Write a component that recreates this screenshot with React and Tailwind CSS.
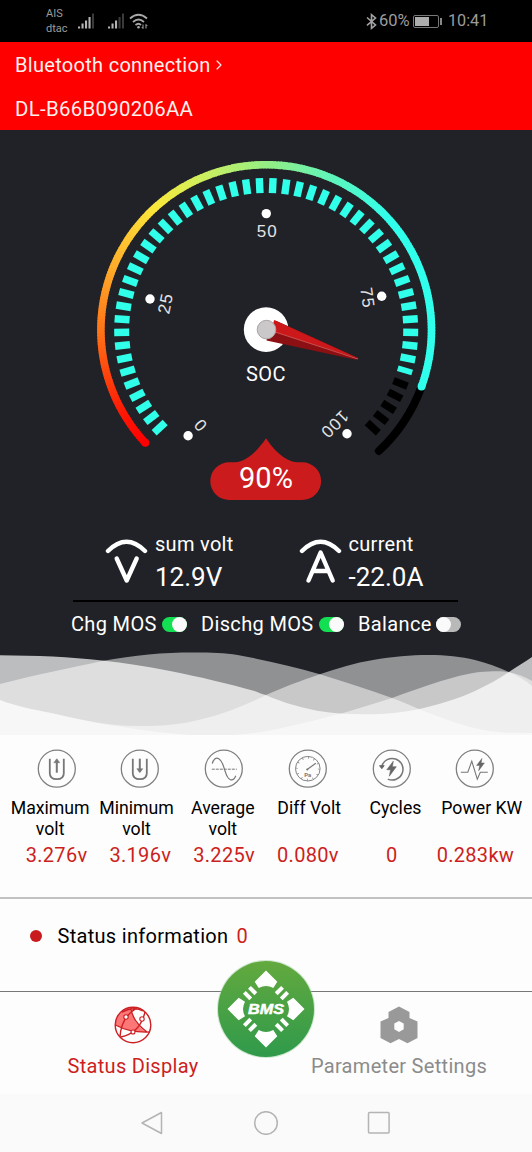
import { ChevronRight } from "lucide-react";

const ARC_STOPS = [
  [0, [255, 0, 0]],
  [14, [255, 28, 5]],
  [43, [255, 118, 24]],
  [62, [255, 166, 40]],
  [90, [252, 232, 58]],
  [112, [200, 240, 98]],
  [135, [143, 238, 136]],
  [157, [92, 245, 190]],
  [180, [48, 255, 236]],
  [270, [48, 255, 236]],
];

const CX = 266.2;
const CY = 330;

const polar = (deg, r) => {
  const a = (deg * Math.PI) / 180;
  return [CX + r * Math.cos(a), CY + r * Math.sin(a)];
};

const arcPath = (from, to, r) => {
  const [x1, y1] = polar(from, r);
  const [x2, y2] = polar(to, r);
  return `M${x1} ${y1}A${r} ${r} 0 ${to - from > 180 ? 1 : 0} 1 ${x2} ${y2}`;
};

const arcColor = (t) => {
  const i = ARC_STOPS.findIndex(([pos]) => pos > t);
  const [p0, c0] = ARC_STOPS[i - 1];
  const [p1, c1] = ARC_STOPS[i];
  const k = (t - p0) / (p1 - p0);
  return `rgb(${c0.map((v, n) => Math.round(v + (c1[n] - v) * k)).join(",")})`;
};

const marks = [
  { label: "0", dot: [188.1, 435.8], text: [201, 425.7], rotate: 48 },
  { label: "25", dot: [150, 299], text: [165.2, 303.2], rotate: -78 },
  { label: "50", dot: [266.3, 213.6], text: [267.3, 230.7], rotate: 0 },
  { label: "75", dot: [381.7, 296.2], text: [367.6, 297.8], rotate: 82 },
  { label: "100", dot: [347, 433.7], text: [334.8, 424.6], rotate: 135 },
];

const Gauge = ({ value }) => {
  const start = 137;
  const end = start + value * 2.7;
  const segments = Array.from({ length: Math.round(value * 2.7) }, (_, i) => i);
  const ticks = Array.from({ length: 52 }, (_, i) => i);

  return (
    <svg className="block h-[380px] w-full" viewBox="0 130 532 380">
      <path d={arcPath(end, start + 270, 165.3)} fill="none" stroke="#000" strokeWidth="8" strokeLinecap="round" />
      <circle cx={polar(start, 165.3)[0]} cy={polar(start, 165.3)[1]} r="4" fill={arcColor(0)} />
      <circle cx={polar(end, 165.3)[0]} cy={polar(end, 165.3)[1]} r="4" fill={arcColor(243)} />
      {segments.map((i) => (
        <path
          key={i}
          d={arcPath(start + i, Math.min(start + i + 1.3, end), 165.3)}
          fill="none"
          stroke={arcColor(i)}
          strokeWidth="7.6"
        />
      ))}
      {ticks.map((i) => (
        <rect
          key={i}
          x={CX + 137}
          y={CY - 3.7}
          width="15"
          height={i === 46 ? 5.8 : 7.4}
          fill={i < 47 ? "#30ffea" : "#000"}
          transform={`rotate(${137.5 + i * 5.196} ${CX} ${CY})`}
        />
      ))}
      {marks.map((m) => (
        <g key={m.label}>
          <circle cx={m.dot[0]} cy={m.dot[1]} r="4.7" fill="#fff" />
          <text
            transform={`translate(${m.text[0]} ${m.text[1]}) rotate(${m.rotate})`}
            y="6"
            textAnchor="middle"
            className="fill-[#e4e4e4] font-['Liberation_Sans'] text-[17px] tracking-[1px]"
          >
            {m.label}
          </text>
        </g>
      ))}
      <circle cx="266.1" cy="329.6" r="22.3" fill="#fff" />
      <path d="M275.5 320.5L358.5 358L356 359.8L266.5 340.5L268 330Z" fill="#8c1013" />
      <path d="M274 320L358.5 358.6L272 331Z" fill="#cd181b" />
      <path d="M272 331L358 359" stroke="#d8605c" strokeWidth="0.8" />
      <circle cx="266.5" cy="329.6" r="9.3" fill="#cbc8c9" stroke="#aaa4a5" strokeWidth="1" />
      <text x="266" y="381.3" textAnchor="middle" className="fill-white text-[20px] tracking-[0.4px]">
        SOC
      </text>
      <path
        d="M266 438.3C273 449 285 461.8 297 462.2H302.2A18.9 18.9 0 0 1 302.2 500H229.2A18.9 18.9 0 0 1 229.2 462.2H235C247 461.8 259 449 266 438.3Z"
        fill="#cb1b1c"
      />
      <text x="266" y="488.3" textAnchor="middle" className="fill-white text-[29px]">
        {value}%
      </text>
    </svg>
  );
};

const Signal = ({ active }) => (
  <svg className="h-4 w-4" viewBox="0 0 16 16">
    {[2, 5, 8, 11.5, 15].map((h, i) => (
      <rect key={h} x={i * 3.5} y={15.5 - h} width="2.1" height={h} fill={i < active ? "#b4b4b4" : "#3a3a3a"} />
    ))}
  </svg>
);

const StatusBar = () => (
  <div className="flex h-[42px] items-center bg-black text-[#9c9c9c]">
    <div className="ml-[46px] w-8 text-[11px] leading-[15.5px]">
      <div>AIS</div>
      <div>dtac</div>
    </div>
    <Signal active={4} />
    <div className="ml-[14px]">
      <Signal active={3} />
    </div>
    <svg className="ml-[5px] h-[17px] w-5" viewBox="0 0 20 17" fill="none" stroke="#a8a8a8" strokeWidth="1.8">
      <path d="M1 5.5Q9.5 -2 18 5.5M4 9Q9.5 4 15 9M6.5 12Q9.5 9.5 12 12" />
      <circle cx="9.5" cy="14.3" r="1.3" fill="#a8a8a8" stroke="none" />
      <path d="M14 11.5v4M12.8 14l1.2 1.5M17 15.5v-4M18.3 13l-1.3-1.5" strokeWidth="1" />
    </svg>
    <svg className="ml-[217px] h-[17px] w-3" viewBox="0 0 12 17" fill="none" stroke="#a4a4a4" strokeWidth="1.6">
      <path d="M1 4.5L9.5 12L5.5 15.3V1.7L9.5 5L1 12.3" />
    </svg>
    <span className="w-[35px] pl-px text-[16.5px]">60%</span>
    <div className="flex h-[13px] w-[26px] rounded-[2px] border border-[#777] p-px">
      <div className="w-[14px] bg-[#adadad]" />
    </div>
    <div className="ml-px h-[7px] w-[2px] bg-[#888]" />
    <span className="ml-[6px] text-[16.2px]">10:41</span>
  </div>
);

const Header = () => (
  <header className="h-[88px] bg-[#fe0000] pl-[15px] text-[20px] tracking-[0.3px] text-[#fff0ec]">
    <div className="flex h-[45px] items-center">
      Bluetooth connection
      <ChevronRight className="h-[18px] w-4" strokeWidth={1.7} />
    </div>
    <div className="flex h-[44px] items-center text-[20.4px]">DL-B66B090206AA</div>
  </header>
);

const Reading = ({ label, value, children }) => (
  <div className="flex w-[193.5px]">
    <svg
      className="mt-[27px] h-[48px] w-[43px]"
      viewBox="0 0 43 48"
      fill="none"
      stroke="#fff"
      strokeWidth="4.4"
      strokeLinecap="round"
      strokeLinejoin="round"
    >
      <path d="M3 14Q21.5 -4.5 40 14" />
      {children}
    </svg>
    <div className="ml-[7px] pt-[22px] text-white">
      <div className="text-[20px] leading-6 tracking-[0.3px]">{label}</div>
      <div className="mt-[6px] text-[26px] leading-[30px]">{value}</div>
    </div>
  </div>
);

const Toggle = ({ label, on, className }) => (
  <div className={`flex items-center ${className}`}>
    <span className="flex-1 text-[20px] tracking-[0.35px] whitespace-nowrap text-white">{label}</span>
    <div className={`flex h-[15px] w-[25px] rounded-full ${on ? "justify-end bg-[#12e052]" : "bg-[#b9b9b9]"}`}>
      <div className="h-[15px] w-[15px] rounded-full bg-[#fafafa]" />
    </div>
  </div>
);

const Waves = () => (
  <svg className="block h-[95px] w-full" viewBox="0 640 532 95" fill="#fff">
    <path
      opacity="0.5"
      d="M0 684C35 675 70 668 102 661C135 655 163 652.5 193 652.5C212 652.5 225 652.7 237.5 655C265 660 292 666 319 674C345 682 370 690 392 698C403 702 412 706 421 710C445 719 465 727 489 731C505 733 518 733 532 733V735H0Z"
    />
    <path
      opacity="0.5"
      d="M0 700C15 706 33 709.5 51 713C82 720 110 726 136 726C155 726 170 725.5 187 722.5C216 717 240 708 266 695C285 687 300 681 319 674.6C338 668 355 663 373 660C393 656.5 410 655 429 655C446 655 461 656.5 475 660C487 663 498 667 509 672C518 676 525 680 532 686V735H0Z"
    />
    <path
      opacity="0.5"
      d="M0 700C15 706 33 709.5 51 713C68 717 84 720.5 102 724C130 728 145 731 170 733C186 735 203 736 220 735.5C245 735 266 732 288 726.5C308 722 325 718 343 713C360 708 376 703 392 698C408 692 425 686 441 681C458 676 474 671.5 489 671.5C507 670 520 674 532 681V735H0Z"
    />
    <path
      opacity="0.7"
      d="M0 655.3C36 655.5 70 657 102 660.4C125 663 147 666 170 671C200 677 230 684 254.5 691C258 692.5 262 694 266 695C279 701 291 704.5 305 708C321 712 338 714 356 714C378 715 398 713.5 417 709.5C438 705 457 699 475 691C487 685 499 679 509 672C516 667 525 662 532 657V735H0Z"
    />
  </svg>
);

const UTube = ({ up }) => (
  <>
    <path d="M13 10V24.5Q13 30.5 20 30.5Q27 30.5 27 24.5V10" strokeWidth="1.8" />
    <path d={up ? "M20 24V11" : "M20 10V23"} strokeWidth="2" />
    <path d={up ? "M17 14L20 10L23 14Z" : "M17 20L20 24L23 20Z"} fill="#777" strokeWidth="0.5" />
  </>
);

const bolt = "M21.5 12.5L15 21H18.8L17.5 27.5L24.5 18H20.6Z";

const stats = [
  { label: "Maximum volt", value: "3.276v", icon: <UTube up /> },
  { label: "Minimum volt", value: "3.196v", icon: <UTube /> },
  {
    label: "Average volt",
    value: "3.225v",
    icon: (
      <>
        <path d="M8.5 15C9.5 10.5 12 8.5 15 10C19 12 19.5 18 21.5 23C24 32 29 34 32 27" strokeWidth="1.2" />
        <path d="M8 20.5H33" strokeDasharray="3 1" strokeWidth="1" />
      </>
    ),
  },
  {
    label: "Diff Volt",
    value: "0.080v",
    icon: (
      <>
        <circle cx="20" cy="20" r="12.3" strokeWidth="0.9" />
        <circle cx="20" cy="20" r="11" strokeWidth="2" strokeDasharray="0.7 5.06" />
        <path d="M19 21L28 14.5" strokeWidth="1.1" />
        <circle cx="19.5" cy="20.8" r="1" fill="#777" stroke="none" />
        <text x="20" y="28" textAnchor="middle" fill="#777" stroke="none" className="text-[6px] font-bold">
          Pa
        </text>
      </>
    ),
  },
  {
    label: "Cycles",
    value: "0",
    icon: (
      <>
        <path d="M10 17.5A10.8 10.8 0 1 1 16 30.4" strokeWidth="1.5" />
        <path d="M7.8 17L12.4 17L10 20Z" fill="#666" stroke="#666" />
        <path d={bolt} fill="#666" stroke="#666" strokeWidth="0.6" />
      </>
    ),
  },
  {
    label: "Power KW",
    value: "0.283kw",
    icon: (
      <>
        <path d="M6 23.5H13L17 12.5L22.5 30.5L25.5 23.5H33" strokeWidth="1.1" />
        <path d={bolt} fill="#666" stroke="#666" strokeWidth="0.6" transform="translate(9.5 -0.5) scale(0.82)" />
      </>
    ),
  },
];

const Stats = () => (
  <section className="h-[162px] pt-[14px]">
    <div className="grid grid-cols-6 justify-items-center px-[14.7px]">
      {stats.map((s) => (
        <svg key={s.label} className="h-10 w-10" viewBox="0.2 0.3 40 40" fill="none" stroke="#777">
          <circle cx="20" cy="20" r="18.5" strokeWidth="1.3" stroke="#808080" />
          {s.icon}
        </svg>
      ))}
    </div>
    <div className="mt-[9px] grid h-[42px] grid-cols-6 px-[7px] text-center text-[17.7px] leading-[21px] text-black">
      {stats.map((s) => (
        <div key={s.label} className={s.label.endsWith(" volt") ? "" : "whitespace-nowrap"}>
          {s.label}
        </div>
      ))}
    </div>
    <div className="mt-[3px] grid grid-cols-6 px-[14.7px] text-center text-[20px] leading-6 tracking-[0.3px] text-[#cc1f20]">
      {stats.map((s) => (
        <div key={s.label}>{s.value}</div>
      ))}
    </div>
  </section>
);

const BmsLogo = () => (
  <svg className="absolute top-[-35px] left-[214px] h-[104px] w-[104px]" viewBox="-52 -52 104 104">
    <defs>
      <linearGradient id="bms" x1="0" y1="0" x2="0" y2="1">
        <stop offset="0" stopColor="#63a93e" />
        <stop offset="1" stopColor="#2f9a4b" />
      </linearGradient>
    </defs>
    <circle r="49" fill="#9dcf9f" opacity="0.5" />
    <circle r="48" fill="url(#bms)" />
    {[0, 90, 180, 270].map((a) => (
      <g key={a} transform={`rotate(${a})`} fill="#fff">
        <path d="M0 -38.5L11.3 -27.3L7.3 -21Q0 -25 -7.3 -21L-11.3 -27.3Z" />
        <g transform="rotate(45)">
          <rect x="-5.6" y="-27" width="4" height="9" />
          <rect x="1.6" y="-27" width="4" height="9" />
        </g>
      </g>
    ))}
    <text
      y="4.5"
      textAnchor="middle"
      textLength="36"
      lengthAdjust="spacingAndGlyphs"
      className="fill-white stroke-white stroke-[0.5px] font-['Liberation_Sans'] text-[14px] font-bold italic"
    >
      BMS
    </text>
  </svg>
);

const GlobeIcon = () => (
  <svg className="h-[38px] w-[38px]" viewBox="-19 -19 38 38" fill="none" stroke="#cc2024" strokeWidth="1.4">
    <path d="M-17.5 -3C-15 -12 -8 -17 -2 -18C-2 -8 4 1 13 7Q-2 8 -17 0Z" fill="#fd7777" stroke="none" />
    <circle r="17.8" />
    <path d="M-11 -13Q1 -19 10 -14M-17.5 0Q-3 8 17 7M-2 -17Q-1 -4 14 7M-13 12Q-12 -8 4 -17M-12 12Q7 8 12 -13" />
    <g fill="#fff" strokeWidth="1.1">
      <circle cx="-7" cy="-8" r="2.2" />
      <circle cx="9" cy="-6" r="2.2" />
      <circle cx="0" cy="7" r="2" />
    </g>
  </svg>
);

const HexIcon = () => (
  <svg className="h-[38px] w-[38px]" viewBox="-19 -20.5 38 38" fill="#999">
    <path d="M0 -20L10.5 -14.5V-8.5L18.5 -5V11.5L8.5 16.7L0 12.5L-8.5 16.7L-18.5 11.5V-5L-10.5 -8.5V-14.5Z" />
    <path d="M0 -5.5L4.7 -3V2.8L0 5.5L-4.7 2.8V-3Z" fill="#fdfdfd" />
  </svg>
);

const TabBar = () => (
  <nav className="relative flex h-[103px] border-t border-[#777] text-[20px] leading-6">
    <div className="flex w-1/2 flex-col items-center pt-[14px] text-[#cc1f20]">
      <GlobeIcon />
      <span className="mt-[10px] tracking-[0.3px]">Status Display</span>
    </div>
    <div className="flex w-1/2 flex-col items-center pt-[14px] text-[#8b8b8b]">
      <HexIcon />
      <span className="mt-[10px] tracking-[0.3px]">Parameter Settings</span>
    </div>
    <BmsLogo />
  </nav>
);

const SystemNav = () => (
  <div className="flex h-[58px] items-center bg-[#fafafa] pl-[140px]">
    <svg
      className="h-6 w-[252px]"
      viewBox="140 1111 252 24"
      fill="none"
      stroke="#b4b4b4"
      strokeWidth="1.5"
      strokeLinejoin="round"
    >
      <path d="M142 1123L161.5 1112.5V1133.5Z" />
      <circle cx="266" cy="1123" r="11.3" />
      <rect x="368.5" y="1112.5" width="20.6" height="20.6" rx="1" />
    </svg>
  </div>
);

export default function App() {
  return (
    <div className="h-[1152px] w-[532px] overflow-hidden bg-[#fdfdfd] font-[Roboto,sans-serif]">
      <StatusBar />
      <Header />
      <section className="h-[605px] bg-[#212227]">
        <Gauge value={90} />
        <div className="flex h-[90px] pl-[105px]">
          <Reading label="sum volt" value="12.9V">
            <path d="M11.7 21.5L21.7 43.5L31.7 21.5" />
          </Reading>
          <Reading label="current" value="-22.0A">
            <path d="M9.5 43.5L21.6 15.5L33.7 43.5M14.5 34H28.5" />
          </Reading>
        </div>
        <div className="ml-[73px] h-[2px] w-[385px] bg-black" />
        <div className="flex h-[38px] items-center pt-[6px] pl-[71px]">
          <Toggle label="Chg MOS" on className="w-[116px]" />
          <Toggle label="Dischg MOS" on className="ml-[14px] w-[143px]" />
          <Toggle label="Balance" className="ml-[14px] w-[103px]" />
        </div>
        <Waves />
      </section>
      <Stats />
      <section className="flex h-[94px] items-center border-t-2 border-[#c2c2c2] pb-[18px] pl-[30px] text-[20px]">
        <div className="h-3 w-3 rounded-full bg-[#c81b1d]" />
        <span className="ml-[15.5px] tracking-[0.3px] text-black">Status information</span>
        <span className="ml-2 text-[#cc1f20]">0</span>
      </section>
      <TabBar />
      <SystemNav />
    </div>
  );
}
